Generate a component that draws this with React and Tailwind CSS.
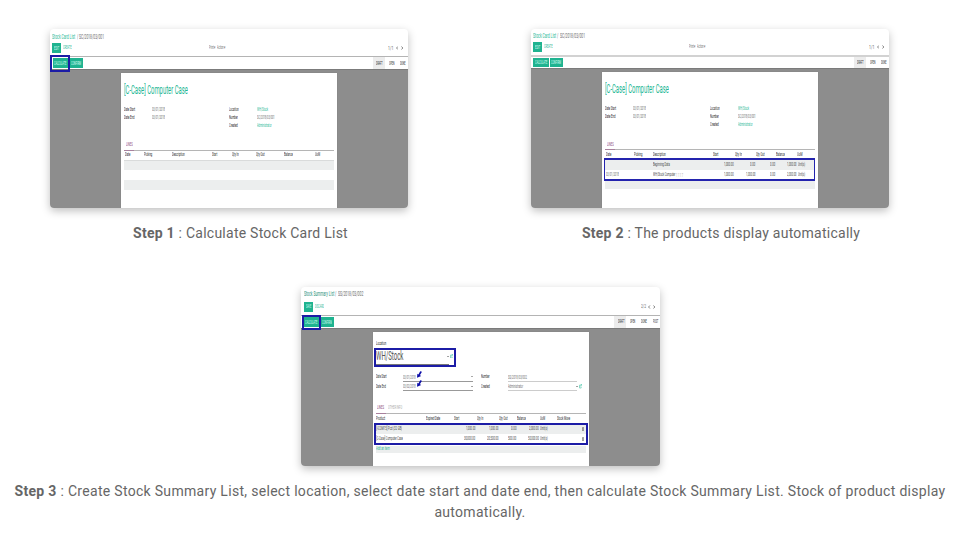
import { useLayoutEffect, useRef } from "react";

// Single-line label condensed to an exact width inside its column.
function T({ w, col = "", size = "text-[5.8px]", color = "text-[#444]", children }) {
  const ref = useRef(null);
  useLayoutEffect(() => {
    const el = ref.current;
    el.style.transform = `scaleX(${w / el.offsetWidth})`;
  }, [w]);
  return (
    <div className={`flex shrink-0 items-center overflow-visible leading-none tracking-normal ${col}`}>
      <span ref={ref} className={`inline-block origin-left whitespace-nowrap ${size} ${color}`}>
        {children}
      </span>
    </div>
  );
}

const GREEN = "text-[#1fb795]";
const GRAY = "text-[#6c6c6c]";
const HEAD = "text-[#222]";

function Row({ className = "h-[8px]", children }) {
  return <div className={`flex shrink-0 items-stretch ${className}`}>{children}</div>;
}

function Solid({ className, w, children }) {
  return (
    <div className={`flex shrink-0 bg-[#1fb390] ${className}`}>
      <T w={w} size="text-[5px]" color="text-[#d9fff5]">{children}</T>
    </div>
  );
}

function Card({ width = "w-[358px]", children }) {
  return (
    <div className={`flex h-[179px] flex-col overflow-hidden rounded-[4px] bg-white shadow-[0_3px_9px_rgba(0,0,0,0.25)] ${width}`}>
      {children}
    </div>
  );
}

function Chevron({ left }) {
  return (
    <svg viewBox="0 0 3 5" className="h-[4px] w-[2.4px] shrink-0" fill="none" stroke="#555" strokeWidth="0.9">
      <path d={left ? "M2.4 .6 .7 2.5 2.4 4.4" : "M.6 .6 2.3 2.5 .6 4.4"} />
    </svg>
  );
}

function Caret() {
  return (
    <svg viewBox="0 0 4 2" className="h-[1.2px] w-[2px] shrink-0" fill="#555">
      <path d="M0 0h4L2 2z" />
    </svg>
  );
}

function External() {
  return (
    <svg viewBox="0 0 6 10" className="h-[4.4px] w-[3px] shrink-0" fill="none" stroke="#1fb795" strokeWidth="1.1">
      <path d="M3 2.5H.8v6.7h3.7V6M3.2.8h2.2v3M5.2 1 2.3 5.8" />
    </svg>
  );
}

function Trash() {
  return (
    <svg viewBox="0 0 4 8" className="h-[4.5px] w-[2.2px] shrink-0" fill="none" stroke="#555" strokeWidth="0.9">
      <path d="M0 1.4h4M.6 1.4v6h2.8v-6M2 2.6v4M1.2.5h1.6" />
    </svg>
  );
}

function Pointer() {
  return (
    <svg viewBox="0 0 14 18" className="h-[7px] w-[5px]" fill="#0d0da8">
      <path d="M0 18 1 7l3 2 5-9 5 1-6 10 4 2z" />
    </svg>
  );
}

function Sheet({ className, children }) {
  return (
    <div className="flex min-h-0 flex-1 border-t border-[#7b7b7b] bg-[#8d8d8d]">
      <div className={`relative flex flex-col bg-white shadow-[0_0_1px_#777] ${className}`}>{children}</div>
    </div>
  );
}

function StockCardList({ second }) {
  return (
    <Card>
      <div className={second
        ? "flex h-[28px] shrink-0 flex-col border-b-2 border-[#d2d2d2] pl-[2px]"
        : "flex h-[28px] shrink-0 flex-col border-b border-[#b4b4b4] pl-[2.3px]"}>
        <Row className={second ? "h-[13px] pt-[1px]" : "h-[14px] pt-[2px]"}>
          <T col="w-[24.4px]" w={23} size="text-[7.2px]" color={GREEN}>Stock Card List</T>
          <T col="w-[2.4px]" w={1.3} size="text-[7.2px]" color={GRAY}>/</T>
          <T w={25} size="text-[7.2px]" color={GRAY}>SC/2018/03/001</T>
        </Row>
        <Row className="h-[10px]">
          <Solid className="w-[8.7px] pl-[2px]" w={5}>EDIT</Solid>
          <T col="ml-[2.3px] w-[145.5px] pt-[1px]" w={8.4} size="text-[4.8px]" color={GREEN}>CREATE</T>
          <T col="w-[8px]" w={7} size="text-[4.6px]" color={GRAY}>Print ▾</T>
          <T col="w-[171.3px]" w={8.5} size="text-[4.6px]" color={GRAY}>Action ▾</T>
          <T col="w-[7.9px] pt-[1px]" w={5.4} size="text-[5.2px]" color={GRAY}>1/1</T>
          <div className="flex items-center gap-[2.7px]"><Chevron left /><Chevron /></div>
        </Row>
      </div>
      <div className={`relative flex shrink-0 ${second ? "h-[11px] pl-[2px]" : "h-[12px] pl-[2.7px]"}`}>
        <Solid className="my-[0.6px] w-[16px] pl-[1.5px]" w={12.3}>CALCULATE</Solid>
        <Solid className="my-[0.6px] ml-[0.9px] w-[13px] pl-[1.4px]" w={10.2}>CONFIRM</Solid>
        <div className="ml-auto flex">
          <T col="w-[12.3px] bg-[#ececec] pl-[3px] pt-[2px]" w={6.4} size="text-[4.6px]" color={HEAD}>DRAFT</T>
          <T col="w-[14.7px] pl-[3.4px] pt-[2px]" w={5.4} size="text-[4.6px]" color={HEAD}>OPEN</T>
          <T col="w-[8px] pt-[2px]" w={5.4} size="text-[4.6px]" color={HEAD}>DONE</T>
        </div>
        {!second && <div className="absolute -top-[2px] left-0 h-[17px] w-[20px] border-2 border-[#1c1ca6]" />}
      </div>
      <Sheet className="ml-[71px] mt-[3px] w-[216px]">
        <div className="flex flex-col pl-[3px]">
          <Row className={second ? "mt-[8.3px] h-[18px]" : "mt-[8px] h-[18px]"}>
            <T w={64} size="text-[12.8px]" color={GREEN}>[C-Case] Computer Case</T>
          </Row>
          <div className="mt-[6.5px] flex flex-col">
            <Row>
              <T col="w-[27.7px]" w={11.2} color={HEAD}>Date Start</T>
              <T col="w-[77.3px]" w={13} color={GRAY}>03/01/2018</T>
              <T col="w-[27.7px]" w={9.5} color={HEAD}>Location</T>
              <T w={11} color={GREEN}>WH/Stock</T>
            </Row>
            <Row>
              <T col="w-[27.7px]" w={10.5} color={HEAD}>Date End</T>
              <T col="w-[77.3px]" w={13} color={GRAY}>03/01/2018</T>
              <T col="w-[27.7px]" w={9} color={HEAD}>Number</T>
              <T w={17.7} color={GRAY}>SC/2018/03/001</T>
            </Row>
            <Row>
              <T col="ml-[105px] w-[27.7px]" w={8.7} color={HEAD}>Created</T>
              <T w={14.5} color={GREEN}>Administrator</T>
            </Row>
          </div>
          <div className="mt-[11px] flex w-[210px] border-b border-[#b5b5b5]">
            <div className="-mb-[1px] flex h-[10px] w-[10.3px] border-b border-[#a8819d] pl-[2px]">
              <T w={6.4} size="text-[5.4px]" color="text-[#8a4a78]">LINES</T>
            </div>
          </div>
        </div>
        {second ? (
          <div className="relative flex flex-col pl-[2.5px]">
            <Row className="h-[10px] pl-[1px]">
              <T col="w-[28.3px]" w={5.3} color={HEAD}>Date</T>
              <T col="w-[19.3px]" w={8.5} color={HEAD}>Picking</T>
              <T col="w-[60px]" w={12.6} color={HEAD}>Description</T>
              <T col="w-[21.7px]" w={5.6} color={HEAD}>Start</T>
              <T col="w-[21.7px]" w={7} color={HEAD}>Qty In</T>
              <T col="w-[19.3px]" w={8.4} color={HEAD}>Qty Out</T>
              <T col="w-[21.3px]" w={9} color={HEAD}>Balance</T>
              <T w={5.4} color={HEAD}>UoM</T>
            </Row>
            <Row className="h-[9.9px] w-[210px] bg-[#eceeee] pt-[1px]">
              <T col="ml-[48.8px] w-[70.7px]" w={16.7}>Beginning Data</T>
              <T col="w-[26px]" w={9.6}>1,000.00</T>
              <T col="w-[19.7px]" w={5}>0.00</T>
              <T col="w-[17px]" w={5}>0.00</T>
              <T col="w-[11.2px]" w={9.4}>1,000.00</T>
              <T w={7.1}>Unit(s)</T>
            </Row>
            <Row className="h-[9.8px] pl-[1px]">
              <T col="w-[47.8px]" w={13} color={GRAY}>03/01/2018</T>
              <T col="w-[23px]" w={22.3}>WH/Stock Computer</T>
              <T col="w-[47.7px] pt-[1px]" w={7} size="text-[5px]" color="text-[#aaa]">1 1 1 7</T>
              <T col="w-[21.7px]" w={9.6}>1,000.00</T>
              <T col="w-[24px]" w={9.4}>1,000.00</T>
              <T col="w-[17px]" w={5}>0.00</T>
              <T col="w-[11.2px]" w={9.4}>2,000.00</T>
              <T w={7.1}>Unit(s)</T>
            </Row>
            <div className="mt-[2px] h-[7.5px] w-[210px] bg-[#eceeee]" />
            <div className="absolute left-[1.5px] top-[8.4px] h-[22.6px] w-[211.4px] border-x border-y-2 border-[#2424ae]" />
          </div>
        ) : (
          <div className="flex flex-col pl-[3px]">
            <Row className="h-[9.5px] pl-[0.7px]">
              <T col="w-[19px]" w={5.3} color={HEAD}>Date</T>
              <T col="w-[28px]" w={8.3} color={HEAD}>Picking</T>
              <T col="w-[40.3px]" w={12.6} color={HEAD}>Description</T>
              <T col="w-[20.3px]" w={5.4} color={HEAD}>Start</T>
              <T col="w-[23.7px]" w={6.8} color={HEAD}>Qty In</T>
              <T col="w-[28.3px]" w={8.6} color={HEAD}>Qty Out</T>
              <T col="w-[30.4px]" w={9} color={HEAD}>Balance</T>
              <T w={5} color={HEAD}>UoM</T>
            </Row>
            <div className="h-[10.3px] w-[210px] border-t border-[#d9dbdb] bg-[#eceeee]" />
            <div className="mt-[9.7px] h-[9.7px] w-[210px] bg-[#eceeee]" />
          </div>
        )}
      </Sheet>
    </Card>
  );
}

function StockSummaryList() {
  return (
    <Card width="w-[359px]">
      <div className="flex h-[29px] shrink-0 flex-col border-b border-[#b4b4b4] pl-[2.7px]">
        <Row className="h-[14px]">
          <T col="w-[31.4px]" w={30.3} size="text-[7.2px]" color="text-[#248f78]">Stock Summary List</T>
          <T col="w-[2.6px]" w={1.3} size="text-[7.2px]" color={GRAY}>/</T>
          <T w={25.4} size="text-[7.2px]" color={GRAY}>SS/2018/03/002</T>
        </Row>
        <Row className="mt-[1px] h-[9.7px]">
          <Solid className="w-[9px] pl-[2px]" w={5.2}>SAVE</Solid>
          <T col="ml-[2.6px] w-[325.7px]" w={9} size="text-[4.6px]" color={GREEN}>DISCARD</T>
          <T col="w-[7.3px]" w={5} size="text-[5.2px]" color={GRAY}>2/2</T>
          <div className="flex items-center gap-[2.5px]"><Chevron left /><Chevron /></div>
        </Row>
      </div>
      <div className="relative flex h-[12px] shrink-0 pl-[2px]">
        <Solid className="my-[0.8px] w-[17.5px] pl-[2.3px]" w={12.3}>CALCULATE</Solid>
        <Solid className="my-[0.8px] ml-[0.5px] w-[12.9px] pl-[1.3px]" w={10}>CONFIRM</Solid>
        <div className="ml-auto flex">
          <T col="w-[12px] bg-[#ececec] pl-[3.3px] pt-[1.5px]" w={6.4} size="text-[4.6px]" color={HEAD}>DRAFT</T>
          <T col="w-[15px] pl-[4px] pt-[1.5px]" w={5.2} size="text-[4.6px]" color={HEAD}>OPEN</T>
          <T col="w-[11.7px] pt-[1.5px]" w={5.7} size="text-[4.6px]" color={HEAD}>DONE</T>
          <T col="w-[7px] pt-[1.5px]" w={5.3} size="text-[4.6px]" color={HEAD}>POST</T>
        </div>
        <div className="absolute -top-[1.5px] left-[1.3px] h-[15.5px] w-[19px] border-2 border-[#1c1ca6]" />
      </div>
      <Sheet className="ml-[71.7px] mt-[3px] w-[216px] pl-[3px]">
        <Row className="mt-[8px] h-[8px]">
          <T w={10} color={HEAD}>Location</T>
        </Row>
        <Row className="h-[17.2px] w-[73.5px] border-b border-[#777]">
          <T col="w-[71.6px] pl-[0.4px]" w={27.4} size="text-[12.4px]" color="text-[#555]">WH/Stock</T>
          <div className="flex items-center gap-[1.2px]"><Caret /><External /></div>
        </Row>
        <div className="mt-[7.3px] flex">
          <div className="flex w-[27.3px] flex-col gap-[1px] pl-[0.4px] pt-[0.6px]">
            <Row className="h-[8.5px]"><T w={10.7} color={HEAD}>Date Start</T></Row>
            <Row className="h-[8.5px]"><T w={9.7} color={HEAD}>Date End</T></Row>
          </div>
          <div className="flex w-[77.7px] flex-col gap-[1px] pt-[0.6px]">
            {["03/01/2018", "03/02/2018"].map((date) => (
              <Row key={date} className="relative h-[8.7px] w-[69.7px] items-center border-b border-[#999]">
                <T col="w-[67.7px] pt-[1px]" w={12.7} color={GRAY}>{date}</T>
                <div className="flex items-center"><Caret /></div>
                <div className="absolute -top-[2.5px] left-[14px] flex"><Pointer /></div>
              </Row>
            ))}
          </div>
          <div className="flex w-[27.3px] flex-col gap-[1px] pt-[0.6px]">
            <Row className="h-[8.5px]"><T w={8.8} color={HEAD}>Number</T></Row>
            <Row className="h-[8.5px]"><T w={8.7} color={HEAD}>Created</T></Row>
          </div>
          <div className="flex flex-col gap-[1px] pt-[0.6px]">
            <Row className="h-[8.7px] w-[69.3px] border-b border-[#ccc]">
              <T col="pt-[1px]" w={18.7} color={GRAY}>SS/2018/03/002</T>
            </Row>
            <Row className="h-[8.7px] w-[69.3px] border-b border-[#ccc]">
              <T col="w-[67.7px] pt-[1px]" w={15} color={GRAY}>Administrator</T>
              <div className="flex items-center gap-[1.7px]"><Caret /><External /></div>
            </Row>
          </div>
        </div>
        <div className="mt-[12.2px] flex w-[210.3px] border-b border-[#b5b5b5]">
          <div className="-mb-[1px] flex h-[10px] w-[10.3px] border-b border-[#a8819d] pl-[1.6px]">
            <T w={6.7} size="text-[5.4px]" color="text-[#8a4a78]">LINES</T>
          </div>
          <T col="ml-[2px]" w={14} size="text-[5.4px]" color="text-[#aaa]">OTHER INFO</T>
        </div>
        <div className="relative flex flex-col">
          <Row className="h-[10.6px] pl-[0.3px]">
            <T col="w-[50.3px]" w={9} color={HEAD}>Product</T>
            <T col="w-[28px]" w={14} color={HEAD}>Expired Date</T>
            <T col="w-[22.7px]" w={5.4} color={HEAD}>Start</T>
            <T col="w-[22.3px]" w={6.3} color={HEAD}>Qty In</T>
            <T col="w-[17.7px]" w={8.4} color={HEAD}>Qty Out</T>
            <T col="w-[23px]" w={9} color={HEAD}>Balance</T>
            <T col="w-[16.7px]" w={5} color={HEAD}>UoM</T>
            <T w={13} color={HEAD}>Stock Move</T>
          </Row>
          <Row className="h-[10px] w-[210.3px] bg-[#eceeee] pl-[0.3px]">
            <T col="w-[90px]" w={26}>[I-COM15] Pcd (32 GB)</T>
            <T col="w-[22.7px]" w={9.3}>1,000.00</T>
            <T col="w-[22px]" w={9.3}>1,000.00</T>
            <T col="w-[18px]" w={5.3}>0.00</T>
            <T col="w-[11px]" w={9.6}>2,000.00</T>
            <T col="w-[42.3px]" w={7.6}>Unit(s)</T>
            <div className="flex items-center"><Trash /></div>
          </Row>
          <Row className="h-[10px] w-[210.3px] pl-[0.3px]">
            <T col="w-[88.3px]" w={27}>[C-Case] Computer Case</T>
            <T col="w-[22.4px]" w={11}>30,000.00</T>
            <T col="w-[21px]" w={11.3}>20,500.00</T>
            <T col="w-[20px]" w={8.3}>500.00</T>
            <T col="w-[12px]" w={10.6}>50,000.00</T>
            <T col="w-[42.6px]" w={7.6}>Unit(s)</T>
            <div className="flex items-center"><Trash /></div>
          </Row>
          <Row className="mt-[1.4px] h-[7.5px] w-[210.3px] bg-[#eceeee] pl-[0.3px]">
            <T w={13.7} color={GREEN}>Add an item</T>
          </Row>
          <div className="absolute -left-[1.7px] top-[8.9px] h-[22.6px] w-[213.8px] border-2 border-[#1c1ca6]" />
        </div>
        <div className="absolute left-[1.3px] top-[15.5px] h-[19.7px] w-[82px] border-2 border-[#1c1ca6]" />
      </Sheet>
    </Card>
  );
}

export default function App() {
  return (
    <main className="flex h-[538px] w-[961px] flex-col bg-white pt-[29px] text-center font-[Roboto,sans-serif] text-[14px] leading-[21px] tracking-[0.25px] text-[#666]">
      <section className="flex h-[258px] pl-[50px] text-left">
        <figure className="w-[481px]">
          <StockCardList />
          <figcaption className="mt-[15px] w-[381px] text-center"><b>Step 1</b> : Calculate Stock Card List</figcaption>
        </figure>
        <figure>
          <StockCardList second />
          <figcaption className="mt-[15px] w-[380px] text-center"><b>Step 2</b> : The products display automatically</figcaption>
        </figure>
      </section>
      <figure className="flex flex-col items-center">
        <div className="text-left"><StockSummaryList /></div>
        <figcaption className="mt-[15px] w-[960px] whitespace-nowrap pr-[1px] tracking-[0.305px]">
          <b>Step 3</b> : Create Stock Summary List, select location, select date start and date end, then calculate Stock Summary List. Stock of product display
          <br />
          automatically.
        </figcaption>
      </figure>
    </main>
  );
}
